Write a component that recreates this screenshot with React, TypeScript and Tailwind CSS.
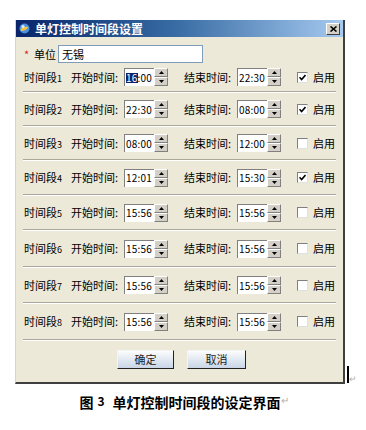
import React from "react";

const rows = [
  { n: 1, s: "16:00", e: "22:30", on: true, h: "h-[28px]", hl: true },
  { n: 2, s: "22:30", e: "08:00", on: true, h: "h-[32px]" },
  { n: 3, s: "08:00", e: "12:00", on: false, h: "h-[32px]" },
  { n: 4, s: "12:01", e: "15:30", on: true, h: "h-[33px]" },
  { n: 5, s: "15:56", e: "15:56", on: false, h: "h-[33px]" },
  { n: 6, s: "15:56", e: "15:56", on: false, h: "h-[35px]" },
  { n: 7, s: "15:56", e: "15:56", on: false, h: "h-[34px]" },
  { n: 8, s: "15:56", e: "15:56", on: false, h: "h-[35px]" },
];

function Spinner({ v, hl }: { v: string; hl?: boolean }) {
  return (
    <div className="flex h-[18px] w-[44px]">
      <div className="flex w-[30px] items-center border-l border-t border-[#808080] bg-white pl-[1px] text-[10px] leading-none tracking-[0.2px] text-black">
        {hl ? (
          <>
            <span className="bg-[#0a246a] text-white">{v.slice(0, 2)}</span>
            <span>{v.slice(2)}</span>
          </>
        ) : (
          <span>{v}</span>
        )}
      </div>
      <div className="flex w-[14px] flex-col">
        <div className="flex h-[9px] items-center justify-center border border-b-[#808080] border-l-white border-r-[#808080] border-t-white bg-[#d4d0c8]">
          <svg width="5" height="3" viewBox="0 0 5 3">
            <path d="M2.5 0 L5 3 L0 3 Z" fill="#000" />
          </svg>
        </div>
        <div className="flex h-[9px] items-center justify-center border border-b-[#808080] border-l-white border-r-[#808080] border-t-white bg-[#d4d0c8]">
          <svg width="5" height="3" viewBox="0 0 5 3">
            <path d="M0 0 L5 0 L2.5 3 Z" fill="#000" />
          </svg>
        </div>
      </div>
    </div>
  );
}

function Check({ on }: { on: boolean }) {
  return (
    <div className="flex h-[11px] w-[11px] items-center justify-center border border-b-[#e0e0e0] border-l-[#808080] border-r-[#e0e0e0] border-t-[#808080] bg-white">
      {on && (
        <svg width="7" height="7" viewBox="0 0 7 7">
          <path d="M0.5 3.2 L2.6 5.5 L6.5 1" stroke="#000" strokeWidth="1.6" fill="none" />
        </svg>
      )}
    </div>
  );
}

function Sep() {
  return <div className="mx-[7px] h-[2px] border-b border-t border-b-white border-t-[#aca899]" />;
}

function Btn({ t }: { t: string }) {
  return (
    <div className="flex h-[19px] items-center justify-center border border-b-[#222] border-l-[#f4f4f4] border-r-[#222] border-t-[#f4f4f4] bg-gradient-to-b from-[#fbfcfd] to-[#c9d6e6] text-[11px] text-[#222]">
      {t}
    </div>
  );
}

export default function App() {
  return (
    <div
      className="relative h-[430px] w-[366px] overflow-hidden bg-white pl-[15px] pt-[20px] text-[11px] text-black"
      style={{ fontFamily: '"Noto Sans CJK SC", "Noto Sans", sans-serif' }}
    >
      <div className="flex h-[364px] w-[330px] flex-col border-b-2 border-l border-r-2 border-b-[#404040] border-l-[#d8d4c8] border-r-[#404040] bg-[#ece9d8]">
        {/* title bar */}
        <div className="flex h-[17px] items-center bg-gradient-to-r from-[#0a246a] via-[#3a6ea5] to-[#a6caf0] pl-[3px] pr-[3px]">
          <svg width="11" height="11" viewBox="0 0 11 11">
            <circle cx="5.5" cy="5.5" r="5" fill="#4a8fe0" />
            <path d="M1.5 6 Q4 3 9.5 4 Q7 8 2 8 Z" fill="#f3c53a" />
            <circle cx="4" cy="3.5" r="1.6" fill="#d7ecff" />
          </svg>
          <span className="ml-[5px] text-[12px] font-bold leading-none text-white">单灯控制时间段设置</span>
          <div className="ml-auto flex h-[12px] w-[14px] items-center justify-center border border-b-[#404040] border-l-white border-r-[#404040] border-t-white bg-[#d4d0c8]">
            <svg width="7" height="6" viewBox="0 0 7 6">
              <path d="M0.5 0.5 L6.5 5.5 M6.5 0.5 L0.5 5.5" stroke="#000" strokeWidth="1.6" />
            </svg>
          </div>
        </div>

        {/* unit row */}
        <div className="mt-[8px] flex h-[18px] items-center pl-[8px]">
          <span className="w-[10px] text-[11px] text-[#e02020]">*</span>
          <span className="w-[24px]">单位</span>
          <div className="flex h-[18px] w-[145px] items-center border border-[#7f9db9] bg-white pl-[3px] text-[11px]">
            无锡
          </div>
        </div>

        {/* rows */}
        <div className="flex flex-col">
          {rows.map((r) => (
            <div key={r.n}>
              <div className={`flex ${r.h} items-center pl-[8px]`}>
                <span className="w-[47px] whitespace-nowrap">
                  时间段<span className="text-[9px]">{r.n}</span>
                </span>
                <span className="w-[53px] whitespace-nowrap">开始时间:</span>
                <Spinner v={r.s} hl={r.hl} />
                <span className="ml-[16px] w-[53px] whitespace-nowrap">结束时间:</span>
                <Spinner v={r.e} />
                <div className="ml-[16px]">
                  <Check on={r.on} />
                </div>
                <span className="ml-[5px]">启用</span>
              </div>
              <Sep />
            </div>
          ))}
        </div>

        {/* buttons */}
        <div className="mt-[9px] flex pl-[101px]">
          <div className="w-[57px]">
            <Btn t="确定" />
          </div>
          <div className="ml-[13px] w-[59px]">
            <Btn t="取消" />
          </div>
        </div>
      </div>

      {/* cursor mark */}
      <div className="absolute left-[347px] top-[366px] flex items-end">
        <div className="h-[17px] w-[2px] bg-black" />
        <span className="text-[9px] leading-none text-[#b0b0b0]">↵</span>
      </div>

      {/* caption */}
      <div className="mt-[8px] flex w-[330px] justify-center pl-[8px] text-[14px] font-bold">
        <span>图</span>
        <span className="ml-[4px] text-[12px]">3</span>
        <span className="ml-[8px]">单灯控制时间段的设定界面</span>
        <span className="text-[10px] font-normal text-[#b0b0b0]">↵</span>
      </div>
    </div>
  );
}
